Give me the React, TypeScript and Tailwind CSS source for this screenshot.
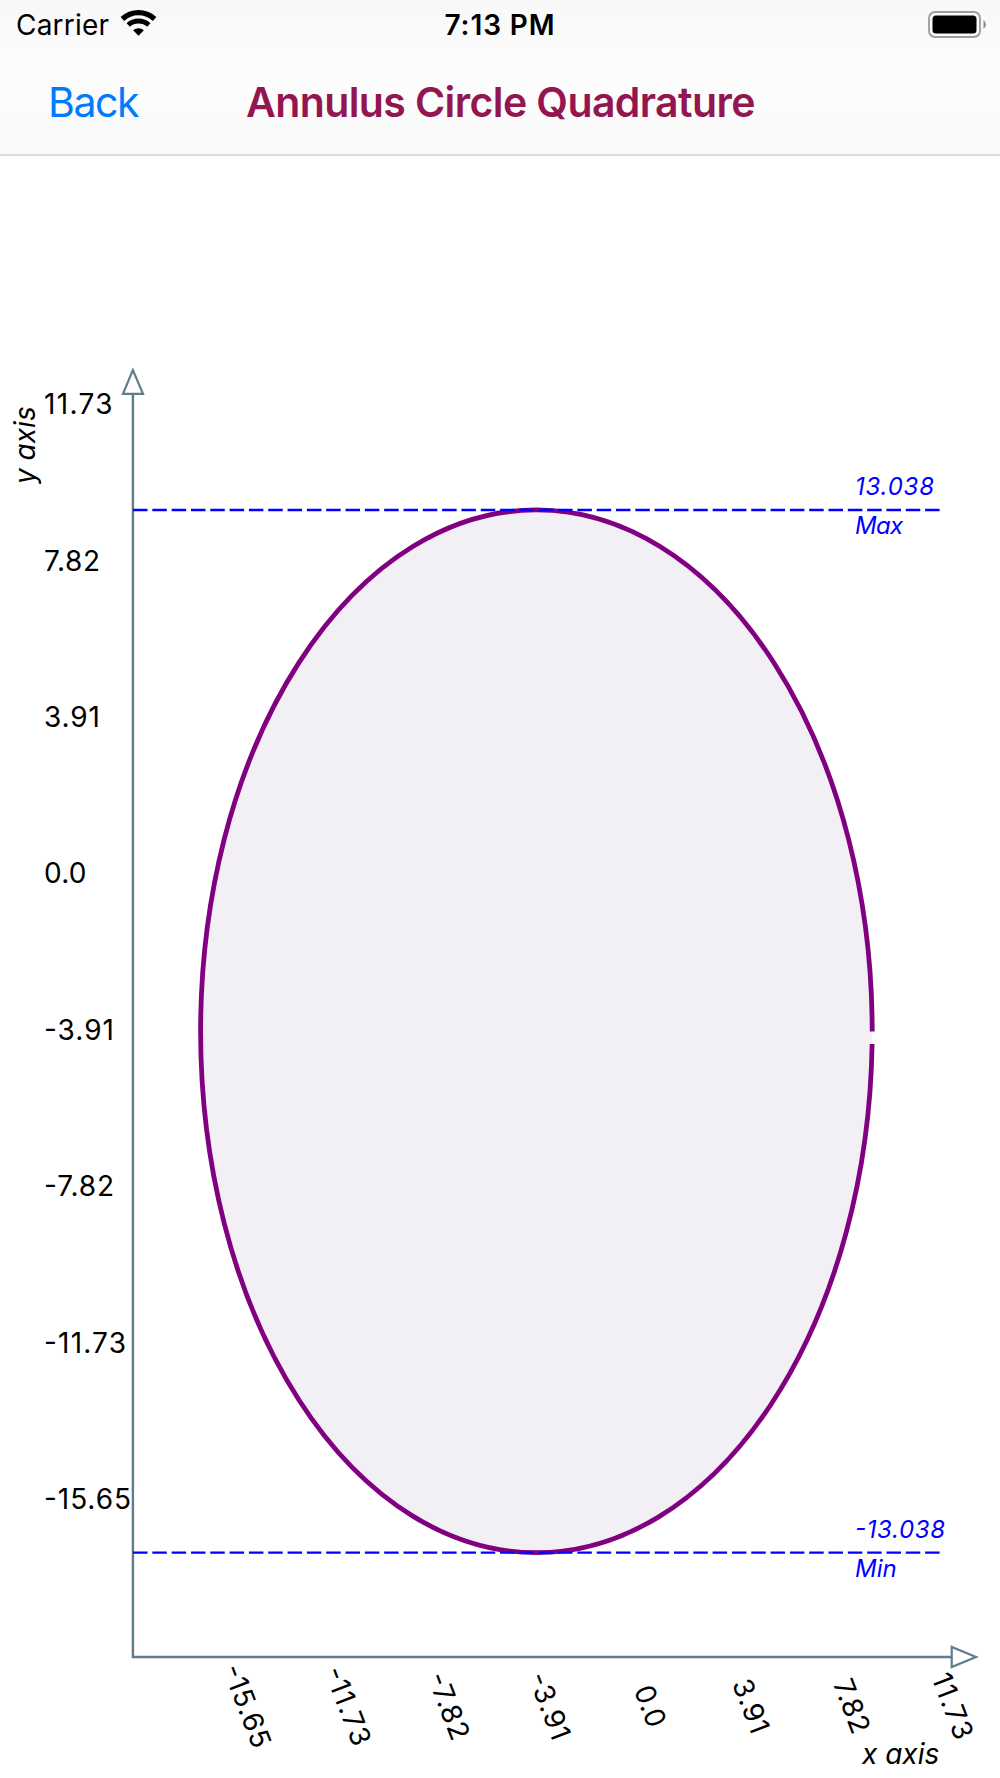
import React from "react";

const ticks = [
  { label: "-15.65", width: 87 },
  { label: "-11.73", width: 82 },
  { label: "-7.82", width: 70 },
  { label: "-3.91", width: 70 },
  { label: "0.0", width: 42.5 },
  { label: "3.91", width: 56 },
  { label: "7.82", width: 56 },
  { label: "11.73", width: 68.5 },
];

const StatusBar: React.FC = () => (
  <div className="grid h-[50px] grid-cols-3 items-center pl-4 pr-[13px] text-[28px] leading-[50px] text-black">
    <div className="flex items-center gap-[11px]">
      <span className="tracking-[0.2px]">Carrier</span>
      <svg width="37" height="28" viewBox="0 0 37 28" fill="none" className="-mt-0.5">
        <path d="M2.4 9A23.6 23.6 0 0 1 34.6 9" stroke="#000" strokeWidth="5.2" />
        <path d="M8.2 15A15.4 15.4 0 0 1 28.8 15" stroke="#000" strokeWidth="5" />
        <path d="M13.1 20.2A8.2 8.2 0 0 1 23.9 20.2L18.5 25.8Z" fill="#000" />
      </svg>
    </div>
    <span className="pr-[3px] text-center font-semibold tracking-[0.9px]">7:13 PM</span>
    <div className="flex justify-end">
      <svg width="60" height="28" viewBox="0 0 60 28" fill="none" className="-mt-px">
        <rect x="2" y="1" width="51" height="25" rx="6" stroke="#9b9b9b" strokeWidth="1.8" />
        <rect x="5.5" y="4.6" width="44" height="18" rx="3.5" fill="#000" />
        <path d="M56.5 9Q61.5 13.5 56.5 18Z" fill="#8a8a8a" />
      </svg>
    </div>
  </div>
);

const NavBar: React.FC = () => (
  <div className="grid h-[104px] grid-cols-[246px_507px_1fr] items-center pt-px text-[41px]">
    <button className="pl-12 text-left tracking-[-1.4px] text-[#007aff]">Back</button>
    <h1 className="whitespace-nowrap text-center font-semibold tracking-[-0.6px] text-[#931651]">
      Annulus Circle Quadrature
    </h1>
  </div>
);

const Chart: React.FC = () => (
  <svg width="1000" height="1622" viewBox="0 156 1000 1622" fill="none" className="block">
    {/* circle, open on the right where the stroke starts */}
    <path
      d="M872.1 1044A335.8 521.4 0 0 1 536.4 1552.7A335.8 521.4 0 0 1 200.6 1031.3A335.8 521.4 0 0 1 536.4 509.9A335.8 521.4 0 0 1 872.2 1031.5"
      fill="#f2eff5"
      stroke="#800080"
      strokeWidth="4.8"
    />

    {/* axes */}
    <g stroke="#607d8b" strokeWidth="2.4">
      <path d="M132.9 394V1657H951" />
      <path d="M132.9 370L123 393.8H143Z" fill="#fff" strokeWidth="2.2" />
      <path d="M976 1657L951.7 1647V1667Z" fill="#fff" strokeWidth="2.2" />
    </g>

    {/* min / max */}
    <g stroke="#0000ff" strokeWidth="2.3" strokeDasharray="14.5 4.82">
      <path d="M133 510H940" />
      <path d="M133 1552.7H940" />
    </g>
    <g fill="#0000ff" fontSize="24" fontStyle="italic">
      <text x="855" y="495" textLength="79">13.038</text>
      <text x="855" y="533.5" textLength="48">Max</text>
      <text x="855" y="1537.5" textLength="90">-13.038</text>
      <text x="855" y="1576.5">Min</text>
    </g>

    <g fill="#000" fontSize="28">
      {ticks.map(({ label, width }, i) => (
        <text key={label} x="44" y={1509 - i * 156.4} textLength={width}>
          {label}
        </text>
      ))}
      {ticks.map(({ label, width }, i) => (
        <text
          key={label}
          textAnchor="middle"
          textLength={width}
          transform={`translate(${247.2 + i * 100.8} 1706) rotate(69)`}
          y="10"
        >
          {label}
        </text>
      ))}
    </g>

    <g fill="#000" fontSize="28" fontStyle="italic">
      <text transform="translate(35 484) rotate(-90)">y axis</text>
      <text x="862" y="1764">x axis</text>
    </g>
  </svg>
);

export default function App() {
  return (
    <div className="h-[1778px] w-[1000px] overflow-hidden bg-white font-['Inter',sans-serif]">
      <header className="h-[156px] border-b-2 border-[#dcdcdc] bg-linear-to-b from-[#f8f8f8] via-[#fdfdfd] to-[#f9f9f9]">
        <StatusBar />
        <NavBar />
      </header>
      <Chart />
    </div>
  );
}
